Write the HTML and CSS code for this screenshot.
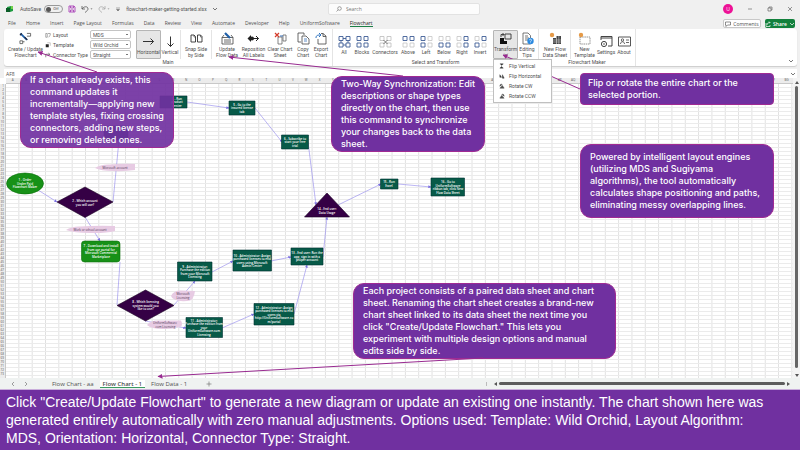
FILE: index.html
```html
<!DOCTYPE html>
<html lang="en">
<head>
<meta charset="utf-8">
<title>flowchart-maker-getting-started.xlsx</title>
<link rel="stylesheet" href="styles.css">
</head>
<body>
<svg class="defs" aria-hidden="true">
  <defs>
    <symbol id="i-create" viewBox="0 0 14 13"><path d="M1 12V9h3v3zM8.500 1h4v3h-4M4 10h2M7 7V5" fill="none" stroke="#444" stroke-width=".8"/><path d="M1.500 1 8.500 8" stroke="#1f5fa8" stroke-width="2"/><path d="m6 5 3 3M1 3l2-2" stroke="#223" stroke-width="1.200"/></symbol>
    <symbol id="i-layout" viewBox="0 0 8 8"><path d="M1 7V2h2v5zM4 2h3v2L5 7" fill="none" stroke="#666" stroke-width=".7"/></symbol>
    <symbol id="i-template" viewBox="0 0 8 8"><path d="M1 3h4v4H1z" fill="#222"/><path d="M3 1h4v4" fill="none" stroke="#999" stroke-width=".7"/></symbol>
    <symbol id="i-connector" viewBox="0 0 8 8"><path d="M1 7V3h5M4.500 1.500 6.500 3l-2 1.500" fill="none" stroke="#444" stroke-width=".8"/></symbol>
    <symbol id="i-right" viewBox="0 0 13 13"><path d="M1 6.500h10.500M8.500 3.500l3 3-3 3" fill="none" stroke="#333"/></symbol>
    <symbol id="i-down" viewBox="0 0 13 13"><path d="M6.500 1.500v10M3.500 8.500l3 3 3-3" fill="none" stroke="#333"/></symbol>
    <symbol id="i-snap" viewBox="0 0 13 13"><path d="M1 3h3l1.500 1.500V10H1zM7.500 3h3L12 4.500V10H7.500z" fill="#fff" stroke="#333" stroke-width=".9"/><path d="M4 3v2h1.500M10.500 3v2H12" fill="none" stroke="#333" stroke-width=".6"/></symbol>
    <symbol id="i-update" viewBox="0 0 13 13"><path d="M1 5.500h11v6.500H1zM1 5.500 3 3M12 5.500 10 3M3 8h7M3 10h7" fill="none" stroke="#444" stroke-width=".8"/><path d="m4 1 5 5" stroke="#1f5fa8" stroke-width="2.200"/></symbol>
    <symbol id="i-repos" viewBox="0 0 13 13"><path d="M.5 6.500 4 3v7z" fill="#222"/><circle cx="5" cy="6.500" r="2" fill="#222"/><path d="M6 6.500h5.500M9 4l2.500 2.500L9 9" fill="none" stroke="#222"/></symbol>
    <symbol id="i-clear" viewBox="0 0 13 13"><path d="M4 5h4v7H4zM9 3h3v6H9z" fill="none" stroke="#666" stroke-width=".8"/><path d="m1 1 4 4M5 1 1 5" stroke="#d43b2a" stroke-width="1.200"/><path d="M6 4h3" stroke="#3971b8"/></symbol>
    <symbol id="i-copy" viewBox="0 0 13 13"><path d="M4 10H1V1h6v2" fill="none" stroke="#444" stroke-width=".8"/><path d="M5 4h4l3 3v5H5z" fill="#fff" stroke="#444" stroke-width=".8"/><path d="M7 7h3M7 9h3" stroke="#3971b8" stroke-width=".8"/></symbol>
    <symbol id="i-export" viewBox="0 0 13 13"><path d="M3 7v5h8V4L8 1.500H6M8 1.500V4.500h3" fill="none" stroke="#444" stroke-width=".8"/><path d="M1 6c0-3 2-3 5-3M4 1l2 2-2 2" fill="none" stroke="#2f74c0"/></symbol>
    <symbol id="i-all" viewBox="0 0 13 13"><path d="M1 1.500h4v4H1zM8 1.500h4v4H8zM1 8h4v4H1zM8 8h4v4H8zM5 3.500h3M5 10h3M3 5.500V8M10 5.500V8" fill="none" stroke="#3f5d96" stroke-width=".9"/></symbol>
    <symbol id="i-blocks" viewBox="0 0 13 13"><path d="M1 1.500h4v4H1zM8 1.500h4v4H8zM1 8h4v4H1zM8 8h4v4H8z" fill="none" stroke="#3f5d96" stroke-width=".9"/></symbol>
    <symbol id="i-conn" viewBox="0 0 13 13"><path d="M1 1.500h4v4H1zM8 1.500h4v4H8zM1 8h4v4H1zM8 8h4v4H8z" fill="none" stroke="#bbb" stroke-width=".8"/><path d="m4.500 5 4 4M8.500 5l-4 4" stroke="#555" stroke-width=".8"/></symbol>
    <symbol id="i-above" viewBox="0 0 13 13"><path d="M1 8h4v4H1zM8 8h4v4H8z" fill="none" stroke="#c4c4c4" stroke-width=".8"/><path d="M1 1.500h4v4H1zM8 1.500h4v4H8z" fill="none" stroke="#3f5d96" stroke-width=".9"/></symbol>
    <symbol id="i-left" viewBox="0 0 13 13"><path d="M8 1.500h4v4H8zM8 8h4v4H8z" fill="none" stroke="#c4c4c4" stroke-width=".8"/><path d="M1 1.500h4v4H1zM1 8h4v4H1z" fill="none" stroke="#3f5d96" stroke-width=".9"/></symbol>
    <symbol id="i-below" viewBox="0 0 13 13"><path d="M1 1.500h4v4H1zM8 1.500h4v4H8z" fill="none" stroke="#c4c4c4" stroke-width=".8"/><path d="M1 8h4v4H1zM8 8h4v4H8z" fill="none" stroke="#3f5d96" stroke-width=".9"/></symbol>
    <symbol id="i-rightsel" viewBox="0 0 13 13"><path d="M1 1.500h4v4H1zM1 8h4v4H1z" fill="none" stroke="#c4c4c4" stroke-width=".8"/><path d="M8 1.500h4v4H8zM8 8h4v4H8z" fill="none" stroke="#3f5d96" stroke-width=".9"/></symbol>
    <symbol id="i-invert" viewBox="0 0 13 13"><path d="M1 1.500h4v4H1zM8 8h4v4H8z" fill="none" stroke="#c4c4c4" stroke-width=".8"/><path d="M8 1.500h4v4H8zM1 8h4v4H1z" fill="none" stroke="#3f5d96" stroke-width=".9"/></symbol>
    <symbol id="i-transform" viewBox="0 0 13 13"><path d="M1 6h4v3h3v3H1z" fill="#111"/><path d="M6 2h6v5H6zM2 5V2.500h3M3.500 1 5 2.500 3.500 4" fill="none" stroke="#333" stroke-width=".9"/></symbol>
    <symbol id="i-tips" viewBox="0 0 13 13"><path d="M2 1h5l2.500 2.500V12H2zM4 4h3M4 6h4M4 8h3" fill="none" stroke="#555" stroke-width=".8"/><circle cx="9.500" cy="9" r="3.200" fill="#2b8ae0"/><path d="M8.500 8.200c0-1.500 2-1.500 2 0 0 .8-1 .8-1 1.600M9.500 10.500v.6" fill="none" stroke="#fff" stroke-width=".7"/></symbol>
    <symbol id="i-flow" viewBox="0 0 13 13"><circle cx="3" cy="3" r="2.200" fill="#e59a48"/><path d="M4 6h3v6H4zM7.500 4H12v8H7.500z" fill="#444"/><path d="M4 8h8M4 10h8M9.800 4v8" stroke="#ddd" stroke-width=".5"/></symbol>
    <symbol id="i-newtpl" viewBox="0 0 13 13"><path d="M2 5h10v7H2z" fill="none" stroke="#777" stroke-width=".8" stroke-dasharray="1.500 .7"/><circle cx="3" cy="3" r="2.200" fill="#e59a48"/></symbol>
    <symbol id="i-settings" viewBox="0 0 13 13"><path d="M1 5V1.500h11V11H8M1 3h11" fill="none" stroke="#444"/><circle cx="4" cy="9" r="2.600" fill="#fff" stroke="#444"/><circle cx="4" cy="9" r=".8" fill="#444"/></symbol>
    <symbol id="i-about" viewBox="0 0 13 13"><path d="M.5 2h12v9H.5z" fill="none" stroke="#444" stroke-width=".9"/><circle cx="4.500" cy="5" r="1.200" fill="none" stroke="#444" stroke-width=".8"/><path d="M2.500 9c0-3 4-3 4 0M8 5h3M8 7.500h3" fill="none" stroke="#444" stroke-width=".8"/></symbol>
    <symbol id="i-flipv" viewBox="0 0 7 7"><path d="M1 1h4L3 3M1 6h4L3 4z" fill="#333" stroke="#333" stroke-width=".5"/></symbol>
    <symbol id="i-fliph" viewBox="0 0 7 7"><path d="M1 5V2l2 3zM4 2l2 4H4z" fill="#333" stroke="#333" stroke-width=".5"/></symbol>
    <symbol id="i-rotcw" viewBox="0 0 7 7"><path d="M1 6h5L4 3zM1 4c0-3 2-3 3-2" fill="#555" stroke="#333" stroke-width=".5"/></symbol>
    <symbol id="i-rotccw" viewBox="0 0 7 7"><path d="M6 6H1l2-3zM6 4c0-3-2-3-3-2" fill="#555" stroke="#333" stroke-width=".5"/></symbol>
    <symbol id="i-chev" viewBox="0 0 6 6"><path d="m1 2 2 2 2-2" fill="none" stroke="#555" stroke-width=".8"/></symbol>
    <marker id="tip-link" viewBox="0 0 5 5" refX="4.500" refY="2.500" markerWidth="3" markerHeight="3" markerUnits="userSpaceOnUse" orient="auto"><path d="M0 0l5 2.500L0 5z" fill="#7b70e0"/></marker>
    <marker id="tip-note" viewBox="0 0 5 5" refX="4.500" refY="2.500" markerWidth="5" markerHeight="5" markerUnits="userSpaceOnUse" orient="auto"><path d="M0 0l5 2.500L0 5z" fill="#982a90"/></marker>
  </defs>
</svg>
<div class="app">
  <header class="titlebar">
    <div class="quick">
      <svg class="ic8" viewBox="0 0 8 8"><path d="M1 2 5 1l2 1v4L4 7 1 6z" fill="#1d9a3f"/><path d="M0 3h4v4H0z" fill="#0b5c28"/><path d="M5 1h2v3H5z" fill="#75d14e"/></svg>
      <label class="autosave">AutoSave <button class="toggle" type="button"><span class="knob"></span>Off</button></label>
      <svg class="ic8" viewBox="0 0 8 8"><path d="M1 1h5l1 1v5H1zM2.500 1v2h3V1M2.500 7V5h3v2" fill="none" stroke="#b052bd"/></svg>
      <svg class="ic12" viewBox="0 0 12 8"><path d="M1 1v3h3M1 4c2-3 6-3 6 0 0 1-1 2-3 3.500" fill="none" stroke="#555" stroke-width=".8"/><path d="M9.500 3.500h2l-1 1z" fill="#555"/></svg>
      <svg class="ic12" viewBox="0 0 12 8"><path d="M7 1v3H4M7 4c-2-3-6-3-6 0 0 1 1 2 3 3.500" fill="none" stroke="#aaa" stroke-width=".8"/><path d="M9.500 3.500h2l-1 1z" fill="#888"/></svg>
      <svg class="ic6" viewBox="0 0 6 6"><path d="M1 2h4M1.500 3.500h3L3 5z" fill="#666" stroke="#666" stroke-width=".5"/></svg>
      <span class="filename">flowchart-maker-getting-started.xlsx</span>
      <svg class="ic6"><use href="#i-chev"/></svg>
    </div>
    <label class="search"><svg class="ic6" viewBox="0 0 6 6"><circle cx="3.500" cy="2.500" r="1.800" fill="none" stroke="#666" stroke-width=".6"/><path d="M2.200 3.800.5 5.500" stroke="#666" stroke-width=".6"/></svg><input type="text" placeholder="Search" aria-label="Search"></label>
    <div class="winctl">
      <span class="avatar">U</span>
      <svg class="ic6" viewBox="0 0 6 6"><path d="M1 3h4" stroke="#555" stroke-width=".6"/></svg>
      <svg class="ic6" viewBox="0 0 6 6"><path d="M1 2h3v3H1zM2 2V1h3v3H4" fill="none" stroke="#555" stroke-width=".6"/></svg>
      <svg class="ic6" viewBox="0 0 6 6"><path d="m1 1 4 4M5 1 1 5" stroke="#555" stroke-width=".6"/></svg>
    </div>
  </header>
  <nav class="tabs">
    <a href="#">File</a><a href="#">Home</a><a href="#">Insert</a><a href="#">Page Layout</a><a href="#">Formulas</a><a href="#">Data</a><a href="#">Review</a><a href="#">View</a><a href="#">Automate</a><a href="#">Developer</a><a href="#">Help</a><a href="#">UniformSoftware</a><a href="#" class="active">Flowchart</a>
    <button class="comments" type="button"><svg class="ic6" viewBox="0 0 6 6"><path d="M.5 1h5v3h-3L1 5.500V4H.5z" fill="none" stroke="#444" stroke-width=".6"/></svg>Comments</button>
    <button class="share" type="button"><svg class="ic6" viewBox="0 0 6 6"><path d="M1 2v3.500h4V4M2 4c0-2 1-2.500 3-2.500M4 .5l1 1-1 1" fill="none" stroke="#fff" stroke-width=".7"/></svg>Share<svg class="ic6" viewBox="0 0 6 6"><path d="m1 2 2 2 2-2" fill="none" stroke="#fff" stroke-width=".7"/></svg></button>
  </nav>
  <section class="ribbon">
    <div class="group">
      <div class="tools">
        <button class="tool xl" type="button"><svg><use href="#i-create"/></svg>Create / Update<br>Flowchart</button>
        <div class="options">
          <label for="o1"><svg class="ic6"><use href="#i-layout"/></svg>Layout</label><select id="o1"><option>MDS</option></select>
          <label for="o2"><svg class="ic6"><use href="#i-template"/></svg>Template</label><select id="o2"><option>Wild Orchid</option></select>
          <label for="o3"><svg class="ic6"><use href="#i-connector"/></svg>Connector Type</label><select id="o3"><option>Straight</option></select>
        </div>
        <button class="tool md on" type="button"><svg><use href="#i-right"/></svg>Horizontal</button>
        <button class="tool sm" type="button"><svg><use href="#i-down"/></svg>Vertical</button>
        <span class="rule"></span>
        <button class="tool lg" type="button"><svg><use href="#i-snap"/></svg>Snap Side<br>by Side</button>
        <span class="rule"></span>
        <button class="tool lg" type="button"><svg><use href="#i-update"/></svg>Update<br>Flow Data</button>
        <button class="tool md" type="button"><svg><use href="#i-repos"/></svg>Reposition<br>All Labels</button>
        <button class="tool lg" type="button"><svg><use href="#i-clear"/></svg>Clear Chart<br>Sheet</button>
        <button class="tool sm" type="button"><svg><use href="#i-copy"/></svg>Copy<br>Chart</button>
        <button class="tool sm" type="button"><svg><use href="#i-export"/></svg>Export<br>Chart</button>
      </div>
      <div class="caption">Main</div>
    </div>
    <div class="group">
      <div class="tools">
        <button class="tool sm" type="button"><svg><use href="#i-all"/></svg>All</button>
        <button class="tool sm" type="button"><svg><use href="#i-blocks"/></svg>Blocks</button>
        <button class="tool lg" type="button"><svg><use href="#i-conn"/></svg>Connectors</button>
        <button class="tool sm" type="button"><svg><use href="#i-above"/></svg>Above</button>
        <button class="tool sm" type="button"><svg><use href="#i-left"/></svg>Left</button>
        <button class="tool sm" type="button"><svg><use href="#i-below"/></svg>Below</button>
        <button class="tool sm" type="button"><svg><use href="#i-rightsel"/></svg>Right</button>
        <button class="tool sm" type="button"><svg><use href="#i-invert"/></svg>Invert</button>
        <div class="dropdown">
          <button class="tool md on" type="button"><svg><use href="#i-transform"/></svg>Transform<svg class="ic6"><use href="#i-chev"/></svg></button>
          <div class="menu">
            <button type="button"><svg><use href="#i-flipv"/></svg>Flip Vertical</button>
            <button type="button"><svg><use href="#i-fliph"/></svg>Flip Horizontal</button>
            <button type="button"><svg><use href="#i-rotcw"/></svg>Rotate CW</button>
            <button type="button"><svg><use href="#i-rotccw"/></svg>Rotate CCW</button>
          </div>
        </div>
        <button class="tool sm" type="button"><svg><use href="#i-tips"/></svg>Editing<br>Tips</button>
      </div>
      <div class="caption">Select and Transform</div>
    </div>
    <div class="group">
      <div class="tools">
        <button class="tool lg" type="button"><svg><use href="#i-flow"/></svg>New Flow<br>Data Sheet</button>
        <span class="rule"></span>
        <button class="tool md" type="button"><svg><use href="#i-newtpl"/></svg>New<br>Template</button>
        <button class="tool sm" type="button"><svg><use href="#i-settings"/></svg>Settings</button>
        <button class="tool sm" type="button"><svg><use href="#i-about"/></svg>About</button>
      </div>
      <div class="caption">Flowchart Maker</div>
    </div>
    <svg class="ic6 collapse"><use href="#i-chev"/></svg>
  </section>
  <div class="formula"><span class="cellname">AF8</span><span class="fx"><svg class="ic6"><use href="#i-chev"/></svg></span></div>
  <div class="sheet">
    <div class="cols" id="cols"></div>
    <div class="rows" id="rows"></div>
    <div class="canvas">
      <svg class="chart" viewBox="6 84 787 294" width="787" height="294">
        <g class="links">
          <path d="M119 140 113 202M120 262 117 305"/>
          <g marker-end="url(#tip-link)">
          <path d="m38 190 19 12"/><path d="m85 217 15 24"/><path d="m174 305 21-24"/><path d="m145 321 41 7"/><path d="m212 272 21-11"/><path d="m271 261 20-4"/><path d="m222 328 32-14"/><path d="m294 314 13-49"/><path d="m323 257 4-40"/><path d="m187 102 42 6"/><path d="m255 108 27 34"/><path d="m308 142 8 63"/><path d="m338 205 43-21"/><path d="m398 184 33 3"/></g>
        </g>
        <g class="label">
          <path d="M95 168q6-4 15-3.500 12-1 25-.5v6q-10 1.500-22 1-12 0-18-3zM66 230q6-4 15-3.500 14-1 34-.5v5q-10 2.500-25 2-16 0-24-3zM171 296q3-6 10-5.500l14 .5q-1 10-8 10-14 1-16-5zM147 325q4-5 12-4.500h22q2 4 0 6-8 3-18 2.500-12 0-16-4z"/>
          <text x="115" y="168.500">Microsoft account</text>
          <text x="90" y="230.500">Work or school account</text>
          <text><tspan x="183" y="295">Microsoft</tspan><tspan x="183" y="298.500">Licensing</tspan></text>
          <text><tspan x="165" y="324">UniformSoftware</tspan><tspan x="165" y="327.500">.com Licensing</tspan></text>
        </g>
        <g class="step">
          <path d="M104 126h24v14h-24zM160 96h27v12h-27zM229 101h26v14h-26zM281.500 135h27v14h-27zM380.500 179h17.500v10h-17.500zM431 178h33.500v18H431zM177.500 262H212v19h-34.500zM233 250h38.500v21H233zM291 248h32v17h-32zM186 317.500h36.500v20H186zM254 303.500h40V325h-40z"/>
          <path class="decision" d="m327 193 22.500 24h-45zM57 202l28-15 28 15-28 15.500zM117 305.500 145.500 290l28.500 15.500L145.500 321z"/>
          <ellipse class="start" cx="25" cy="183.500" rx="18.500" ry="10.500"/>
          <rect class="start" x="81.500" y="241" width="38.500" height="21" rx="3"/>
          <text><tspan x="177" y="99.500">3 - Run</tspan><tspan x="177" y="103">product</tspan><tspan x="177" y="106.500">center</tspan></text>
          <text><tspan x="242" y="105.500">5 - Go to the</tspan><tspan x="242" y="109">insured license</tspan><tspan x="242" y="112.500">tab</tspan></text>
          <text><tspan x="295" y="139.500">6 - Subscribe to</tspan><tspan x="295" y="143">start your free</tspan><tspan x="295" y="146.500">trial</tspan></text>
          <text><tspan x="327" y="209.500">14 - End user:</tspan><tspan x="327" y="213.500">Data Usage</tspan></text>
          <text><tspan x="389" y="183">15 - Run</tspan><tspan x="389" y="186.500">Excel</tspan></text>
          <text><tspan x="448" y="183">16 - Go to</tspan><tspan x="448" y="186.500">UniformSoftware</tspan><tspan x="448" y="190">ribbon tab, click New</tspan><tspan x="448" y="193.500">Flow Data Sheet</tspan></text>
          <text><tspan x="25" y="181">1 - Order</tspan><tspan x="25" y="184.500">Under Paid</tspan><tspan x="25" y="188">Flowchart Maker</tspan></text>
          <text><tspan x="85" y="202">2 - Which account</tspan><tspan x="85" y="205.500">you will use?</tspan></text>
          <text><tspan x="101" y="247">7 - Download and install</tspan><tspan x="101" y="250.500">from our portal for</tspan><tspan x="101" y="254">Microsoft Commercial</tspan><tspan x="101" y="257.500">Marketplace</tspan></text>
          <text><tspan x="145.500" y="303">8 - Which licensing</tspan><tspan x="145.500" y="306.500">system would you</tspan><tspan x="145.500" y="310">like to use?</tspan></text>
          <text><tspan x="195" y="267.500">9 - Administrator:</tspan><tspan x="195" y="271">Purchase the edition</tspan><tspan x="195" y="274.500">from your Microsoft</tspan><tspan x="195" y="278">Licensing</tspan></text>
          <text><tspan x="252" y="256.500">10 - Administrator: Assign</tspan><tspan x="252" y="260">purchased licenses to end</tspan><tspan x="252" y="263.500">users using Microsoft</tspan><tspan x="252" y="267">Admin Center</tspan></text>
          <text><tspan x="307" y="254">13 - End user: Run the</tspan><tspan x="307" y="257.500">app, sign in with a</tspan><tspan x="307" y="261">proper account</tspan></text>
          <text><tspan x="204" y="321.500">11 - Administrator:</tspan><tspan x="204" y="325">Purchase the edition from</tspan><tspan x="204" y="328.500">your</tspan><tspan x="204" y="332">UniformSoftware.com</tspan><tspan x="204" y="335.500">Licensing</tspan></text>
          <text><tspan x="274" y="308.500">12 - Administrator: Assign</tspan><tspan x="274" y="312">purchased licenses to end</tspan><tspan x="274" y="315.500">users via</tspan><tspan x="274" y="319">http://UniformSoftware.co</tspan><tspan x="274" y="322.500">m/portal</tspan></text>
        </g>
      </svg>
    </div>
    <div class="vscroll"><span class="up"></span><span class="thumb"></span><span class="dn"></span></div>
  </div>
  <footer class="sheetbar">
    <svg class="ic6" viewBox="0 0 6 6"><path d="M4 1 2 3l2 2" fill="none" stroke="#777" stroke-width=".7"/></svg>
    <svg class="ic6" viewBox="0 0 6 6"><path d="m2 1 2 2-2 2" fill="none" stroke="#777" stroke-width=".7"/></svg>
    <div class="sheets"><a href="#">Flow Chart - aa</a><a href="#" class="active">Flow Chart - 1</a><a href="#">Flow Data - 1</a><button type="button" aria-label="New sheet"><svg class="ic6" viewBox="0 0 6 6"><path d="M3 .5v5M.5 3h5" stroke="#666" stroke-width=".6"/></svg></button></div>
    <div class="hscroll"><span class="lf"></span><span class="thumb"></span><span class="rt"></span></div>
  </footer>
  <p class="banner">Click "Create/Update Flowchart" to generate a new diagram or update an existing one instantly. The chart shown here was generated entirely automatically with zero manual adjustments. Options used: Template: Wild Orchid, Layout Algorithm: MDS, Orientation: Horizontal, Connector Type: Straight.</p>

  <p class="note note-create">If a chart already exists, this<br>command updates it<br>incrementally—applying new<br>template styles, fixing crossing<br>connectors, adding new steps,<br>or removing deleted ones.</p>
  <p class="note note-sync">Two-Way Synchronization: Edit<br>descriptions or shape types<br>directly on the chart, then use<br>this command to synchronize<br>your changes back to the data<br>sheet.</p>
  <p class="note note-flip">Flip or rotate the entire chart or the<br>selected portion.</p>
  <p class="note note-engine">Powered by intelligent layout engines<br>(utilizing MDS and Sugiyama<br>algorithms), the tool automatically<br>calculates shape positioning and paths,<br>eliminating messy overlapping lines.</p>
  <p class="note note-sheets">Each project consists of a paired data sheet and chart<br>sheet. Renaming the chart sheet creates a brand-new<br>chart sheet linked to its data sheet the next time you<br>click "Create/Update Flowchart." This lets you<br>experiment with multiple design options and manual<br>edits side by side.</p>
  <svg class="arrows" viewBox="0 0 800 450" width="800" height="450" aria-hidden="true">
    <g marker-end="url(#tip-note)"><path d="M97 72 38 52"/><path d="M403 76 229 57"/><path d="m580 89-77-34"/><path d="m483 358-325 18.500"/></g>
  </svg>
</div>
<script src="headers.js"></script>
</body>
</html>
```
FILE: styles.css
```css
* { box-sizing: border-box; }
body { margin: 0; font: 5px/6px "Open Sans", "Noto Sans", sans-serif; color: #505050; background: #f0f0f0; }
button, input, select { font: inherit; color: inherit; margin: 0; padding: 0; border: 0; background: none; }
a { color: inherit; text-decoration: none; }
svg { flex: none; }
.defs { position: absolute; width: 0; height: 0; }
.app { position: relative; display: flex; flex-direction: column; min-height: 100vh; overflow: hidden; }
.ic6 { width: 6px; height: 6px; }
.ic8 { width: 8px; height: 8px; }
.ic12 { width: 12px; height: 8px; }

.titlebar { display: grid; grid-template-columns: 41fr 19fr 40fr; align-items: center; height: 18px; }
.quick { display: flex; align-items: center; gap: 5px; padding-left: 6px; font-family: Roboto, sans-serif; }
.autosave { display: flex; align-items: center; gap: 3px; margin-left: 1px; }
.toggle { display: flex; align-items: center; gap: 2px; width: 19px; height: 8px; padding: 0 1px; border: 1px solid #999; border-radius: 4px; font-size: 4px; }
.knob { width: 5px; height: 5px; border-radius: 50%; background: #555; }
.search { display: flex; align-items: center; gap: 4px; height: 12px; padding: 0 7px; background: #fcfcfc; border: 1px solid #e2e2e2; border-radius: 2px; }
.search input { flex: 1; min-width: 0; height: 8px; outline: 0; }
.search input::placeholder { color: #777; opacity: 1; }
.winctl { display: flex; justify-content: flex-end; align-items: center; gap: 14px; padding-right: 7px; }
.avatar { width: 10px; height: 10px; border-radius: 50%; background: #ed1296; color: #fff; text-align: center; line-height: 10px; }

.tabs { display: flex; align-items: center; gap: 10px; height: 11px; padding: 0 5px 0 8px; }
.tabs a { white-space: nowrap; border-bottom: 1px solid transparent; }
.tabs a.active { border-color: #1b7f46; color: #222; }
.comments, .share { display: flex; align-items: center; justify-content: center; gap: 2px; height: 9px; border-radius: 2px; }
.comments { width: 38px; margin-left: auto; border: 1px solid #c8c8c8; background: #fff; }
.share { width: 30px; margin-left: -6px; background: #12803c; color: #fff; font-weight: 600; }

.ribbon { display: flex; margin: 0 3px 0 4px; height: 37px; background: #fff; border-radius: 3px; box-shadow: 0 1px 1px #ccc; font-family: Roboto, "Liberation Sans", sans-serif; }
.group { display: flex; flex-direction: column; padding: 1px 2px 0; border-right: 1px solid #e4e4e4; }
.tools { display: flex; height: 29px; }
.caption { text-align: center; line-height: 6px; }
.tool { display: block; height: 29px; padding-top: 1px; white-space: nowrap; text-align: center; border-radius: 1px; }
.tool svg { display: block; width: 13px; height: 13px; margin: 0 auto 1px; }
.tool .ic6 { width: 6px; height: 5px; }
.sm { width: 18px; }
.md { width: 25px; }
.lg { width: 28px; }
.xl { width: 39px; }
.on { background: #e6e6e6; border: 1px solid #b5b5b5; padding-top: 0; }
.rule { width: 1px; margin: 0 1px; background: #e4e4e4; }
.options { display: grid; grid-template-columns: 45px 41px; grid-auto-rows: 9px; row-gap: 1px; align-items: center; margin-right: 5px; }
.options label { display: flex; align-items: center; gap: 2px; white-space: nowrap; }
.options select { appearance: none; width: 100%; height: 9px; padding: 0 2px; border: 1px solid #c4c4c4; border-radius: 2px; background: linear-gradient(#777, #777) right 2px center / 2px 1px no-repeat #fff; }
.dropdown { position: relative; margin-left: 4px; }
.menu { position: absolute; z-index: 2; top: 29px; left: 0; width: 59px; padding: 1px 0; background: #fff; border: 1px solid #c0c0c0; }
.menu button { display: flex; align-items: center; gap: 4px; width: 100%; height: 10px; padding-left: 5px; white-space: nowrap; }
.menu svg { width: 6px; height: 6px; }
.collapse { margin: 29px 3px 0 auto; }

.formula { display: flex; align-items: center; height: 9px; margin: 3px 3px 0 4px; background: #fff; }
.cellname { width: 62px; padding-left: 2px; }
.fx { display: flex; flex: 1; justify-content: flex-end; padding-right: 1px; }

.sheet { flex: 1; display: grid; grid-template: 6px minmax(294px, 1fr) / 6px 1fr 7px; background: #fff; }
.cols { grid-column: 2; display: flex; background: #ececec; border-bottom: 1px solid #c8c8c8; font-size: 3px; line-height: 5px; color: #555; }
.cols span { flex: 1 1 0; min-width: 0; text-align: center; }
.rows { grid-row: 2; background: #ececec; border-right: 1px solid #c8c8c8; font-size: 3px; line-height: 4px; text-align: right; padding-right: 1px; overflow: hidden; color: #555; height: 294px; min-height: 100%; }
.rows span { display: block; height: 4px; }
.canvas { position: relative; overflow: hidden; background: repeating-linear-gradient(#0000 0 3px, #ebebeb 3px 4px), linear-gradient(90deg, #0000 calc(100% - 1px), #e0e0e0 0) 0 0 / calc(100% / 59) 100%; }
.chart { display: block; }
.links { fill: none; stroke: #8e84ec; stroke-width: .6px; }
.chart text { text-anchor: middle; font-size: 3px; }
.label path { fill: #e7cbe3; }
.label text { fill: #4a3050; }
.step path { fill: #075a48; stroke: #033; stroke-width: .6px; }
.step .decision { fill: #350045; stroke: #1a0022; }
.step .start { fill: #179117; stroke: #0d700d; stroke-width: .6px; }
.step text { fill: #fff; font-weight: 600; }
.vscroll { grid-column: 3; grid-row: 1 / 3; display: flex; flex-direction: column; align-items: center; gap: 2px; background: #f4f4f4; padding: 3px 0 1px; }
.vscroll .thumb { flex: 1; width: 3px; border-radius: 2px; background: #666; margin-bottom: 4px; }
.up, .dn { border: 2px solid transparent; }
.up { border-top: 0; border-bottom: 3px solid #555; }
.dn { border-bottom: 0; border-top: 3px solid #555; }

.sheetbar { display: flex; align-items: center; gap: 7px; height: 12px; padding: 0 10px; background: #eff2f1; border-bottom: 1px solid #c9aedb; }
.sheets { display: flex; align-items: center; gap: 3px; margin-left: 13px; font-size: 6px; line-height: 8px; }
.sheets a { padding: 0 3px; white-space: nowrap; }
.sheets .active { background: #fff; font-weight: 600; box-shadow: inset 0 -1px #3b9a62; }
.sheets button { margin-left: 13px; display: flex; }
.hscroll { display: flex; align-items: center; gap: 2px; width: 39%; margin-left: auto; padding-left: 7px; border-left: 1px solid #bbb; height: 4px; }
.hscroll .thumb { flex: 1; height: 3px; border-radius: 2px; background: #5c5c5c; }
.lf, .rt { border: 2px solid transparent; }
.lf { border-left: 0; border-right: 3px solid #555; }
.rt { border-right: 0; border-left: 3px solid #555; }

.banner { margin: 0; min-height: 60px; padding: 3px 20px 3px 6px; background: #7030a0; color: #fff; font: 14px/18px "Liberation Sans", Roboto, sans-serif; }

.note { position: absolute; margin: 0; padding: 1px 9px; border: 1px solid #a02b93; border-radius: 11px; background: #7030a0; color: #fff; font: 500 9px/12px Inter, Roboto, sans-serif; white-space: nowrap; }
.note-create { left: 20px; top: 72px; width: 154px; background: #7030a0ea; }
.note-sync { left: 331px; top: 76px; width: 154px; }
.note-flip { left: 580px; top: 73px; width: 194px; padding: 3px 7px; border-radius: 4px; }
.note-engine { left: 580px; top: 144px; width: 194px; padding: 6px 9px; }
.note-sheets { left: 353px; top: 283px; width: 263px; }
.arrows { position: absolute; left: 0; top: 0; pointer-events: none; fill: none; stroke: #982a90; stroke-width: 1px; }
```
FILE: headers.js
```javascript
// Fill the column letters and row numbers of the worksheet.
const cell = text => {
  const el = document.createElement('span');
  el.textContent = text;
  return el;
};
const letter = n => (n >= 26 ? String.fromCharCode(64 + Math.floor(n / 26)) : '') + String.fromCharCode(65 + n % 26);
for (let c = 0; c < 59; c++) document.getElementById('cols').append(cell(letter(c)));
for (let r = 1; r <= 73; r++) document.getElementById('rows').append(cell(r));
```
